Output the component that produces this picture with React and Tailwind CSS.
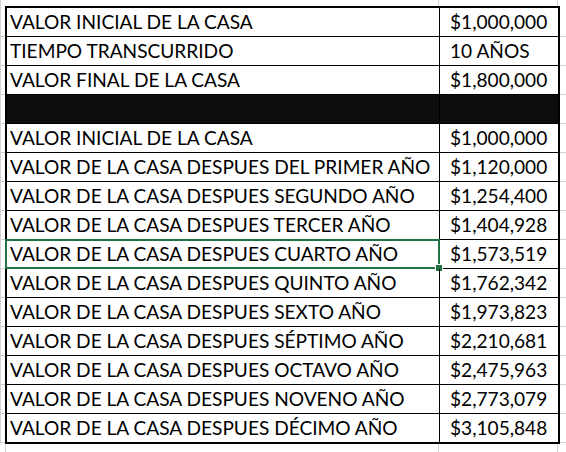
const rows = [
  ["VALOR INICIAL DE LA CASA", "$1,000,000"],
  ["TIEMPO TRANSCURRIDO", "10 AÑOS"],
  ["VALOR FINAL DE LA CASA", "$1,800,000"],
  null,
  ["VALOR INICIAL DE LA CASA", "$1,000,000"],
  ["VALOR DE LA CASA DESPUES DEL PRIMER AÑO", "$1,120,000"],
  ["VALOR DE LA CASA DESPUES SEGUNDO AÑO", "$1,254,400"],
  ["VALOR DE LA CASA DESPUES TERCER AÑO", "$1,404,928"],
  ["VALOR DE LA CASA DESPUES CUARTO AÑO", "$1,573,519"],
  ["VALOR DE LA CASA DESPUES QUINTO AÑO", "$1,762,342"],
  ["VALOR DE LA CASA DESPUES SEXTO AÑO", "$1,973,823"],
  ["VALOR DE LA CASA DESPUES SÉPTIMO AÑO", "$2,210,681"],
  ["VALOR DE LA CASA DESPUES OCTAVO AÑO", "$2,475,963"],
  ["VALOR DE LA CASA DESPUES NOVENO AÑO", "$2,773,079"],
  ["VALOR DE LA CASA DESPUES DÉCIMO AÑO", "$3,105,848"],
];

const SELECTED = 8;

function Margin() {
  return (
    <div className="flex w-[6px] flex-col pt-[2px]">
      {rows.map((_, i) => (
        <div key={i} className="h-[29px] shrink-0 border-b border-[#d4d4d4]" />
      ))}
    </div>
  );
}

function Row({ row, index }) {
  const last = index === rows.length - 1;
  if (!row) {
    return (
      <div className="flex h-[29px] border-b border-black bg-[#0d0d0d]">
        <div className="w-[433px] border-r border-black" />
        <div className="flex-1" />
      </div>
    );
  }
  return (
    <div className={`flex ${last ? "h-[28px]" : "h-[29px] border-b border-black"}`}>
      <div className="relative w-[433px] border-r border-black pl-[3px] leading-[28px] whitespace-nowrap">
        {row[0]}
        {index === SELECTED && (
          <div className="absolute -left-[2px] -top-[1px] h-[30px] w-[435px] border-2 border-[#217346]">
            <div className="absolute -bottom-[4px] -right-[4px] h-[6px] w-[6px] bg-[#217346] outline outline-1 outline-white" />
          </div>
        )}
      </div>
      <div className="flex-1 pl-[10px] leading-[28px] whitespace-nowrap">{row[1]}</div>
    </div>
  );
}

export default function App() {
  return (
    <div className="flex h-[452px] w-[566px] flex-col overflow-hidden bg-white font-['Lato',sans-serif] text-[19.1px] text-black">
      <div className="flex h-[6px] shrink-0">
        <div className="w-[439px] border-r border-l border-[#d4d4d4]" />
        <div className="w-[119px] border-r border-[#d4d4d4]" />
      </div>
      <div className="flex h-[438px] shrink-0">
        <div className="w-[5px] overflow-hidden border-l border-[#d4d4d4]">
          <Margin />
        </div>
        <div className="w-[555px] shrink-0 border-2 border-black">
          {rows.map((row, i) => (
            <Row key={i} row={row} index={i} />
          ))}
        </div>
        <Margin />
      </div>
      <div className="flex flex-1">
        <div className="w-[6px] border-r border-[#d4d4d4]" />
        <div className="w-[433px] border-r border-[#d4d4d4]" />
        <div className="w-[119px] border-r border-[#d4d4d4]" />
      </div>
    </div>
  );
}
